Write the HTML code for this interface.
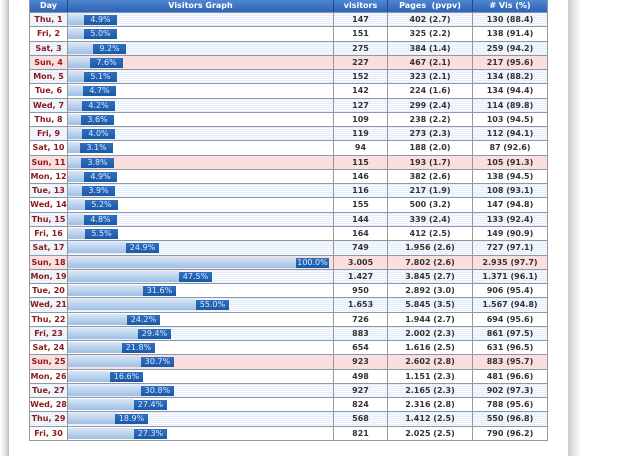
<!DOCTYPE html><html><head><style>
body{margin:0;width:635px;height:456px;overflow:hidden;background:#fff;font-family:"DejaVu Sans","Liberation Sans",sans-serif;font-size:8px;font-weight:bold;position:relative}
.lft{position:absolute;left:0;top:0;width:9px;height:456px;background:linear-gradient(90deg,#fff,#ddd 70%,#bbb)}
.sh{position:absolute;left:568px;top:0;width:14px;height:456px;background:linear-gradient(90deg,#ccc,#eee 60%,#fff)}
.t{position:absolute;left:29px;top:0;width:517px;border-left:1px solid #999;border-right:1px solid #999;border-bottom:1px solid #999}
.h{display:flex;height:12px;background:linear-gradient(#4f86d0,#2d63b5);color:#fff;line-height:12px;text-align:center}
.r{display:flex;height:14.27px;line-height:13px;text-align:center;border-top:1px solid #8d98a8;box-sizing:border-box;color:#333}
.c1{width:37px;border-right:1px solid #999;color:#8b1a1a}
.c2{width:265px;border-right:1px solid #999;position:relative}
.c3{width:53px;border-right:1px solid #999}
.c4{width:84px;border-right:1px solid #999}
.c5{flex:1}
.h div{border-right:1px solid #1d4a8a}.h div:last-child{border:0}
.o{background:repeating-linear-gradient(#e6eef9 0,#e6eef9 1px,#f6f9fd 1px,#f6f9fd 2px)}
.s{background:#fbdede}
.w{background:#fff}
.b{position:absolute;left:0;top:1px;height:11px;background:linear-gradient(#d8e6f6,#9fbfe4)}
.l{position:absolute;top:2px;width:33px;height:10px;line-height:10px;background:linear-gradient(#2f6fc0,#1b5aa5);color:#dbe8ff;font-size:8px;font-weight:normal;text-align:center}
</style></head><body>
<div class="lft"></div><div class="sh"></div>
<div class="t">
<div class="h"><div class="c1" style="color:#fff">Day</div><div class="c2">Visitors Graph</div><div class="c3">visitors</div><div class="c4">Pages&nbsp;&nbsp;(pvpv)</div><div class="c5"># Vis (%)</div></div>
<div class="r o"><div class="c1">Thu, 1</div><div class="c2"><div class="b" style="width:16px"></div><div class="l" style="left:16px">4.9%</div></div><div class="c3">147</div><div class="c4">402 (2.7)</div><div class="c5">130 (88.4)</div></div>
<div class="r w"><div class="c1">Fri, 2</div><div class="c2"><div class="b" style="width:16px"></div><div class="l" style="left:16px">5.0%</div></div><div class="c3">151</div><div class="c4">325 (2.2)</div><div class="c5">138 (91.4)</div></div>
<div class="r o"><div class="c1">Sat, 3</div><div class="c2"><div class="b" style="width:25px"></div><div class="l" style="left:25px">9.2%</div></div><div class="c3">275</div><div class="c4">384 (1.4)</div><div class="c5">259 (94.2)</div></div>
<div class="r s"><div class="c1">Sun, 4</div><div class="c2"><div class="b" style="width:22px"></div><div class="l" style="left:22px">7.6%</div></div><div class="c3">227</div><div class="c4">467 (2.1)</div><div class="c5">217 (95.6)</div></div>
<div class="r o"><div class="c1">Mon, 5</div><div class="c2"><div class="b" style="width:16px"></div><div class="l" style="left:16px">5.1%</div></div><div class="c3">152</div><div class="c4">323 (2.1)</div><div class="c5">134 (88.2)</div></div>
<div class="r w"><div class="c1">Tue, 6</div><div class="c2"><div class="b" style="width:15px"></div><div class="l" style="left:15px">4.7%</div></div><div class="c3">142</div><div class="c4">224 (1.6)</div><div class="c5">134 (94.4)</div></div>
<div class="r o"><div class="c1">Wed, 7</div><div class="c2"><div class="b" style="width:14px"></div><div class="l" style="left:14px">4.2%</div></div><div class="c3">127</div><div class="c4">299 (2.4)</div><div class="c5">114 (89.8)</div></div>
<div class="r w"><div class="c1">Thu, 8</div><div class="c2"><div class="b" style="width:13px"></div><div class="l" style="left:13px">3.6%</div></div><div class="c3">109</div><div class="c4">238 (2.2)</div><div class="c5">103 (94.5)</div></div>
<div class="r o"><div class="c1">Fri, 9</div><div class="c2"><div class="b" style="width:14px"></div><div class="l" style="left:14px">4.0%</div></div><div class="c3">119</div><div class="c4">273 (2.3)</div><div class="c5">112 (94.1)</div></div>
<div class="r w"><div class="c1">Sat, 10</div><div class="c2"><div class="b" style="width:12px"></div><div class="l" style="left:12px">3.1%</div></div><div class="c3">94</div><div class="c4">188 (2.0)</div><div class="c5">87 (92.6)</div></div>
<div class="r s"><div class="c1">Sun, 11</div><div class="c2"><div class="b" style="width:13px"></div><div class="l" style="left:13px">3.8%</div></div><div class="c3">115</div><div class="c4">193 (1.7)</div><div class="c5">105 (91.3)</div></div>
<div class="r w"><div class="c1">Mon, 12</div><div class="c2"><div class="b" style="width:16px"></div><div class="l" style="left:16px">4.9%</div></div><div class="c3">146</div><div class="c4">382 (2.6)</div><div class="c5">138 (94.5)</div></div>
<div class="r o"><div class="c1">Tue, 13</div><div class="c2"><div class="b" style="width:14px"></div><div class="l" style="left:14px">3.9%</div></div><div class="c3">116</div><div class="c4">217 (1.9)</div><div class="c5">108 (93.1)</div></div>
<div class="r w"><div class="c1">Wed, 14</div><div class="c2"><div class="b" style="width:17px"></div><div class="l" style="left:17px">5.2%</div></div><div class="c3">155</div><div class="c4">500 (3.2)</div><div class="c5">147 (94.8)</div></div>
<div class="r o"><div class="c1">Thu, 15</div><div class="c2"><div class="b" style="width:16px"></div><div class="l" style="left:16px">4.8%</div></div><div class="c3">144</div><div class="c4">339 (2.4)</div><div class="c5">133 (92.4)</div></div>
<div class="r w"><div class="c1">Fri, 16</div><div class="c2"><div class="b" style="width:17px"></div><div class="l" style="left:17px">5.5%</div></div><div class="c3">164</div><div class="c4">412 (2.5)</div><div class="c5">149 (90.9)</div></div>
<div class="r o"><div class="c1">Sat, 17</div><div class="c2"><div class="b" style="width:58px"></div><div class="l" style="left:58px">24.9%</div></div><div class="c3">749</div><div class="c4">1.956 (2.6)</div><div class="c5">727 (97.1)</div></div>
<div class="r s"><div class="c1">Sun, 18</div><div class="c2"><div class="b" style="width:228px"></div><div class="l" style="left:228px">100.0%</div></div><div class="c3">3.005</div><div class="c4">7.802 (2.6)</div><div class="c5">2.935 (97.7)</div></div>
<div class="r o"><div class="c1">Mon, 19</div><div class="c2"><div class="b" style="width:111px"></div><div class="l" style="left:111px">47.5%</div></div><div class="c3">1.427</div><div class="c4">3.845 (2.7)</div><div class="c5">1.371 (96.1)</div></div>
<div class="r w"><div class="c1">Tue, 20</div><div class="c2"><div class="b" style="width:75px"></div><div class="l" style="left:75px">31.6%</div></div><div class="c3">950</div><div class="c4">2.892 (3.0)</div><div class="c5">906 (95.4)</div></div>
<div class="r o"><div class="c1">Wed, 21</div><div class="c2"><div class="b" style="width:128px"></div><div class="l" style="left:128px">55.0%</div></div><div class="c3">1.653</div><div class="c4">5.845 (3.5)</div><div class="c5">1.567 (94.8)</div></div>
<div class="r w"><div class="c1">Thu, 22</div><div class="c2"><div class="b" style="width:59px"></div><div class="l" style="left:59px">24.2%</div></div><div class="c3">726</div><div class="c4">1.944 (2.7)</div><div class="c5">694 (95.6)</div></div>
<div class="r o"><div class="c1">Fri, 23</div><div class="c2"><div class="b" style="width:70px"></div><div class="l" style="left:70px">29.4%</div></div><div class="c3">883</div><div class="c4">2.002 (2.3)</div><div class="c5">861 (97.5)</div></div>
<div class="r w"><div class="c1">Sat, 24</div><div class="c2"><div class="b" style="width:54px"></div><div class="l" style="left:54px">21.8%</div></div><div class="c3">654</div><div class="c4">1.616 (2.5)</div><div class="c5">631 (96.5)</div></div>
<div class="r s"><div class="c1">Sun, 25</div><div class="c2"><div class="b" style="width:73px"></div><div class="l" style="left:73px">30.7%</div></div><div class="c3">923</div><div class="c4">2.602 (2.8)</div><div class="c5">883 (95.7)</div></div>
<div class="r w"><div class="c1">Mon, 26</div><div class="c2"><div class="b" style="width:42px"></div><div class="l" style="left:42px">16.6%</div></div><div class="c3">498</div><div class="c4">1.151 (2.3)</div><div class="c5">481 (96.6)</div></div>
<div class="r o"><div class="c1">Tue, 27</div><div class="c2"><div class="b" style="width:73px"></div><div class="l" style="left:73px">30.8%</div></div><div class="c3">927</div><div class="c4">2.165 (2.3)</div><div class="c5">902 (97.3)</div></div>
<div class="r w"><div class="c1">Wed, 28</div><div class="c2"><div class="b" style="width:66px"></div><div class="l" style="left:66px">27.4%</div></div><div class="c3">824</div><div class="c4">2.316 (2.8)</div><div class="c5">788 (95.6)</div></div>
<div class="r o"><div class="c1">Thu, 29</div><div class="c2"><div class="b" style="width:47px"></div><div class="l" style="left:47px">18.9%</div></div><div class="c3">568</div><div class="c4">1.412 (2.5)</div><div class="c5">550 (96.8)</div></div>
<div class="r w"><div class="c1">Fri, 30</div><div class="c2"><div class="b" style="width:66px"></div><div class="l" style="left:66px">27.3%</div></div><div class="c3">821</div><div class="c4">2.025 (2.5)</div><div class="c5">790 (96.2)</div></div>
</div>
</body></html>
